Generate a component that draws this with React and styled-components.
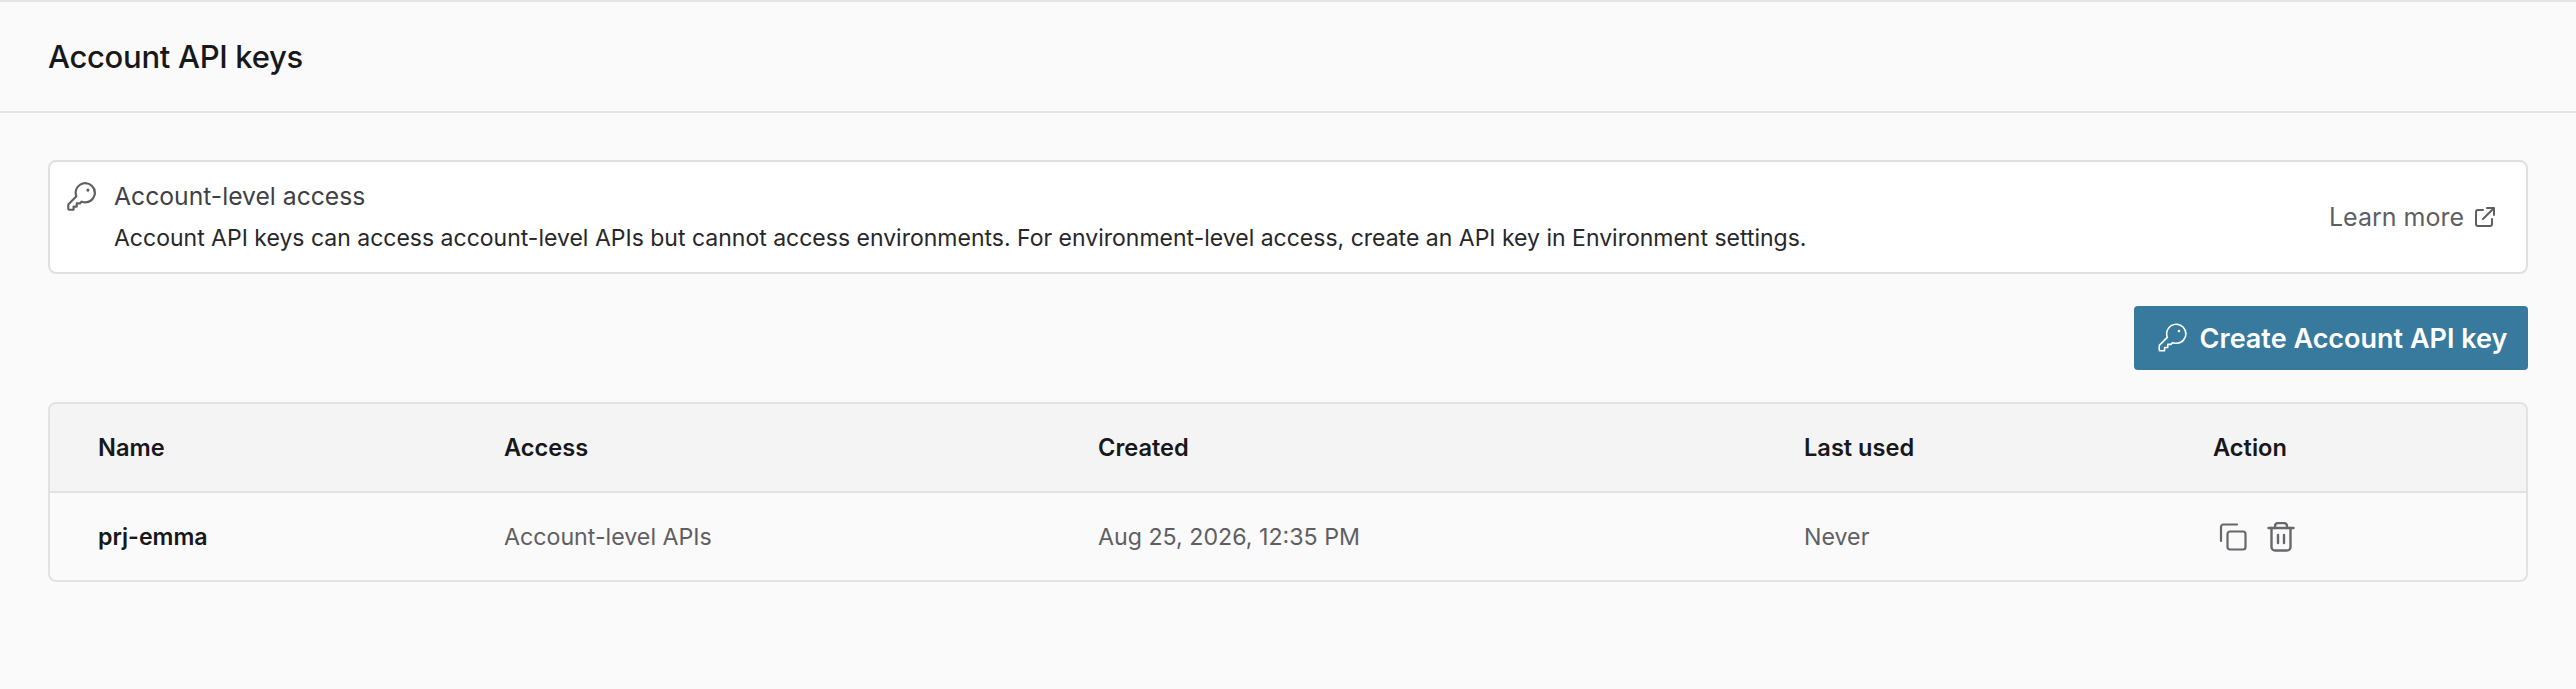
import React from 'react';
import styled, { createGlobalStyle } from 'styled-components';
import { PiKey, PiKeyLight } from 'react-icons/pi';

const GlobalStyle = createGlobalStyle`
  html, body {
    margin: 0;
    padding: 0;
    background: #fafafa;
    font-family: Inter, "Liberation Sans", sans-serif;
    color: #18181b;
  }
`;

const Page = styled.div`
  min-height: 689px;
  border-top: 2px solid #e4e4e5;
  box-sizing: border-box;
`;

const Header = styled.header`
  height: 111px;
  display: flex;
  align-items: center;
  padding: 0 48px;
  box-sizing: border-box;
  border-bottom: 2px solid #e4e4e5;
`;

const Title = styled.h1`
  margin: 0;
  font-size: 31px;
  font-weight: 500;
  letter-spacing: -0.3px;
  color: #18181b;
`;

const Content = styled.main`
  padding: 47px 48px 0 48px;
  display: flex;
  flex-direction: column;
`;

const Notice = styled.section`
  height: 114px;
  box-sizing: border-box;
  background: #fff;
  border: 2px solid #e0e0e1;
  border-radius: 8px;
  display: flex;
  align-items: center;
  padding: 0 30px 0 14px;
`;

const NoticeIcon = styled.div`
  width: 50px;
  align-self: flex-start;
  padding-top: 18px;
  font-size: 34px;
  line-height: 0;
  color: #5f5f63;
`;

const NoticeBody = styled.div`
  flex: 1;
`;

const NoticeTitle = styled.div`
  font-size: 24.7px;
  line-height: 34px;
  color: #3f3f46;
`;

const NoticeText = styled.div`
  font-size: 23px;
  line-height: 34px;
  margin-top: 8px;
  color: #27272a;
`;

const LearnMore = styled.a`
  display: flex;
  align-items: center;
  gap: 10px;
  font-size: 25px;
  color: #5f5f63;
`;

const Actions = styled.div`
  display: flex;
  justify-content: flex-end;
  margin-top: 32px;
`;

const CreateButton = styled.button`
  height: 64px;
  width: 394px;
  display: flex;
  align-items: center;
  justify-content: center;
  gap: 11px;
  border: 0;
  border-radius: 4px;
  background: #38799e;
  color: #fff;
  font-family: inherit;
  font-size: 27px;
  font-weight: 600;
  svg { font-size: 34px; }
`;

const Table = styled.div`
  margin-top: 32px;
  border: 2px solid #e2e2e3;
  border-radius: 8px;
  overflow: hidden;
`;

const Row = styled.div`
  display: grid;
  grid-template-columns: 406px 594px 706px 409px 1fr;
  align-items: center;
  height: 87px;
  padding-left: 48px;
  background: ${p => (p.$head ? '#f4f4f5' : 'transparent')};
  border-bottom: ${p => (p.$head ? '2px solid #e2e2e3' : '0')};
`;

const HeadCell = styled.div`
  font-size: 23.6px;
  font-weight: 600;
  color: #18181b;
`;

const Cell = styled.div`
  font-size: 23.2px;
  font-weight: ${p => (p.$strong ? 600 : 400)};
  color: ${p => (p.$strong ? '#18181b' : '#5f5f63')};
`;

const IconRow = styled.div`
  display: flex;
  align-items: center;
  gap: 20px;
  padding-left: 6px;
  color: #67676c;
`;

function ExternalIcon() {
  return (
    <svg width="22" height="22" viewBox="0 0 22 22" fill="none" stroke="currentColor" strokeWidth="2" strokeLinecap="round" strokeLinejoin="round">
      <path d="M9 4H4a2 2 0 0 0-2 2v12a2 2 0 0 0 2 2h12a2 2 0 0 0 2-2v-5" />
      <path d="M13 2h7v7M20 2 9 13" />
    </svg>
  );
}

function CopyIcon() {
  return (
    <svg width="28" height="28" viewBox="0 0 28 28" fill="none" stroke="currentColor" strokeWidth="2.2" strokeLinecap="round" strokeLinejoin="round">
      <rect x="8.5" y="8.5" width="18" height="18" rx="2.5" />
      <path d="M2 18V4a2.5 2.5 0 0 1 2.5-2.5H18" />
    </svg>
  );
}

function TrashIcon() {
  return (
    <svg width="28" height="30" viewBox="0 0 28 30" fill="none" stroke="currentColor" strokeWidth="2.4" strokeLinecap="round" strokeLinejoin="round">
      <path d="M1.5 6h25" />
      <path d="M8 6V4a3 3 0 0 1 3-3h6a3 3 0 0 1 3 3v2" />
      <path d="M4.5 6v19a3.5 3.5 0 0 0 3.5 3.5h12a3.5 3.5 0 0 0 3.5-3.5V6" />
      <path d="M11 13v8M17 13v8" />
    </svg>
  );
}

export default function App() {
  return (
    <>
      <GlobalStyle />
      <Page>
        <Header>
          <Title>Account API keys</Title>
        </Header>
        <Content>
          <Notice>
            <NoticeIcon><PiKey /></NoticeIcon>
            <NoticeBody>
              <NoticeTitle>Account-level access</NoticeTitle>
              <NoticeText>
                Account API keys can access account-level APIs but cannot access environments. For environment-level access, create an API key in Environment settings.
              </NoticeText>
            </NoticeBody>
            <LearnMore>Learn more <ExternalIcon /></LearnMore>
          </Notice>
          <Actions>
            <CreateButton><PiKeyLight />Create Account API key</CreateButton>
          </Actions>
          <Table>
            <Row $head>
              <HeadCell>Name</HeadCell>
              <HeadCell>Access</HeadCell>
              <HeadCell>Created</HeadCell>
              <HeadCell>Last used</HeadCell>
              <HeadCell>Action</HeadCell>
            </Row>
            <Row>
              <Cell $strong>prj-emma</Cell>
              <Cell>Account-level APIs</Cell>
              <Cell>Aug 25, 2026, 12:35 PM</Cell>
              <Cell>Never</Cell>
              <IconRow><CopyIcon /><TrashIcon /></IconRow>
            </Row>
          </Table>
        </Content>
      </Page>
    </>
  );
}
